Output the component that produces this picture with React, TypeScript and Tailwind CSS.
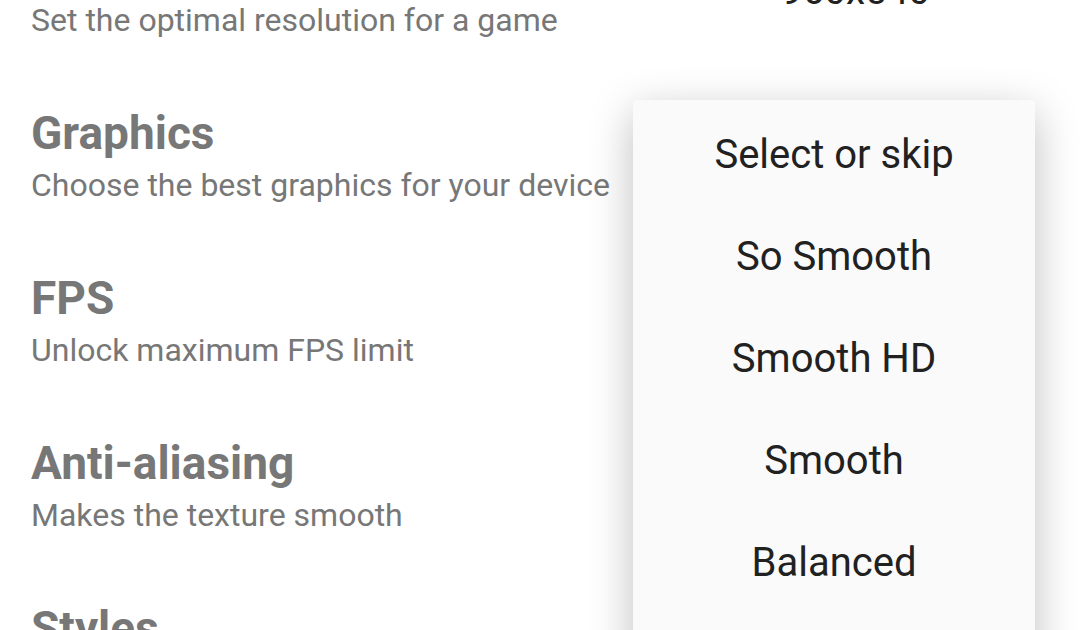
import React from 'react';

interface SettingRowProps {
  title: string;
  subtitle: string;
  value?: string;
}

const SettingRow: React.FC<SettingRowProps> = ({ title, subtitle, value }) => {
  return (
    <div className="flex h-[165px] shrink-0 items-center justify-between pl-[31px]">
      <div className="flex flex-col gap-[10px]">
        <span className="text-[46px] font-bold leading-[48px] text-[#777777]">{title}</span>
        <span className="text-[32px] leading-[36px] text-[#777777]">{subtitle}</span>
      </div>
      {value && (
        <span className="pr-[150px] text-[38.5px] leading-[46px] text-[#212121]">{value}</span>
      )}
    </div>
  );
};

const options = ['Select or skip', 'So Smooth', 'Smooth HD', 'Smooth', 'Balanced', 'Efficiency'];

export default function App() {
  return (
    <div
      className="relative h-[630px] w-[1080px] overflow-hidden bg-white"
      style={{ fontFamily: 'Roboto, "Noto Sans", sans-serif' }}
    >
      <div className="-mt-[92px] flex flex-col">
        <SettingRow title="Resolution" subtitle="Set the optimal resolution for a game" value="960x540" />
        <SettingRow title="Graphics" subtitle="Choose the best graphics for your device" />
        <SettingRow title="FPS" subtitle="Unlock maximum FPS limit" />
        <SettingRow title="Anti-aliasing" subtitle="Makes the texture smooth" />
        <SettingRow title="Styles" subtitle="Choose your favourite style" />
      </div>

      {/* dropdown menu */}
      <div className="absolute left-[633px] top-[100px] w-[402px] rounded-[4px] bg-[#fafafa] pt-[4px] shadow-[0_12px_44px_rgba(0,0,0,0.26)]">
        {options.map((opt) => (
          <div key={opt} className="flex h-[102px] items-center justify-center text-[40px] text-[#212121]">
            {opt}
          </div>
        ))}
      </div>
    </div>
  );
}
